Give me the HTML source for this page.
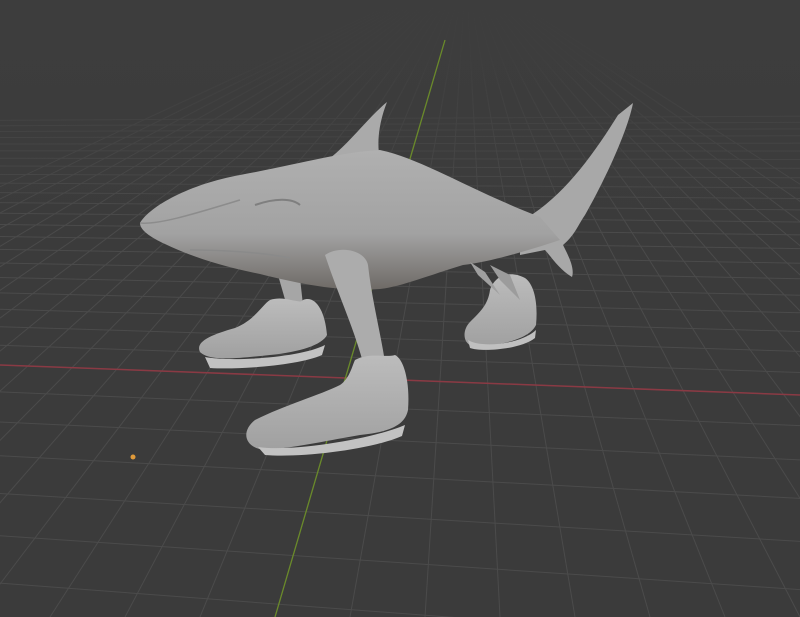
<!DOCTYPE html>
<html><head><style>
html,body{margin:0;padding:0;width:800px;height:617px;overflow:hidden;background:#3b3b3b}
svg{display:block;position:absolute;left:0;top:0}
</style></head><body>
<svg id="s" width="800" height="617" viewBox="0 0 800 617" xmlns="http://www.w3.org/2000/svg">
<defs>
<linearGradient id="body" x1="0" y1="0" x2="0" y2="1">
<stop offset="0" stop-color="#b0b0b0"/><stop offset="0.6" stop-color="#a2a2a2"/><stop offset="1" stop-color="#6e6a66"/>
</linearGradient>
<linearGradient id="shoe" x1="0" y1="0" x2="0" y2="1">
<stop offset="0" stop-color="#bcbcbc"/><stop offset="1" stop-color="#a0a0a0"/>
</linearGradient>
<linearGradient id="fade" x1="0" y1="0" x2="0" y2="1">
<stop offset="0" stop-color="#3d3d3d" stop-opacity="1"/><stop offset="0.3" stop-color="#3d3d3d" stop-opacity="0.85"/><stop offset="1" stop-color="#3d3d3d" stop-opacity="0"/>
</linearGradient>
<clipPath id="c"><rect width="800" height="617"/></clipPath>
</defs>
<rect width="800" height="617" fill="#3b3b3b"/>
<g id="grid" stroke="#4b4b4b" stroke-width="1" fill="none" clip-path="url(#c)"></g>
<line x1="0" y1="365" x2="800" y2="395" stroke="#8a3a44" stroke-width="1.5"/>
<rect x="0" y="0" width="800" height="230" fill="url(#fade)"/>
<line x1="445" y1="40" x2="275" y2="617" stroke="#6a8a2a" stroke-width="1.3"/>
<circle cx="133" cy="457" r="2.5" fill="#e09a3a"/>

<path d="M490 290 C495 275 510 270 525 278 C535 285 538 305 536 325 C530 338 505 345 475 347 C462 345 462 330 470 322 C480 312 488 305 490 290Z" fill="url(#shoe)"/>
<path d="M468 340 C480 348 520 345 536 330 L535 338 C520 350 480 352 470 348Z" fill="#c0c0c0"/>
<path d="M278 275 L300 278 L303 305 L288 310Z" fill="#a6a6a6"/>
<path d="M270 300 C285 295 300 305 303 300 C315 295 325 310 327 335 C322 345 300 352 270 355 C240 358 210 362 200 352 C195 342 210 335 235 328 C255 320 262 305 270 300Z" fill="url(#shoe)"/>
<path d="M205 357 C230 362 300 358 325 345 L322 355 C300 365 240 370 210 368Z" fill="#c2c2c2"/>
<path d="M520 222 C560 200 590 160 618 115 L633 103 C628 130 605 180 585 215 C578 225 575 235 563 245 C568 255 575 268 572 277 C560 270 552 258 545 250 L520 255Z" fill="#a8a8a8"/>
<path d="M505 220 L520 210 L515 225Z" fill="#a0a0a0"/>
<path d="M320 165 C345 150 365 120 387 102 C380 120 376 140 380 160 Z" fill="#aaaaaa"/>
<path d="M140 223 C150 206 190 184 240 175 C300 164 340 152 380 150 C420 158 470 190 540 217 L560 240 C530 250 490 262 463 265 C430 275 400 287 380 289 C340 292 300 284 260 274 C220 266 190 256 165 244 C150 237 140 230 140 223Z" fill="url(#body)"/>
<path d="M140 223 C160 225 200 212 240 200" stroke="#8c8c8c" stroke-width="1.5" fill="none"/>
<path d="M190 250 C220 250 260 252 290 258" stroke="#8a8a8a" stroke-width="1.5" fill="none"/>
<path d="M255 205 C275 198 292 198 300 205" stroke="#7f7f7f" stroke-width="2" fill="none"/>
<path d="M470 262 L485 272 L500 295 L478 275Z" fill="#a0a0a0"/>
<path d="M490 265 L510 275 L520 300 L500 280Z" fill="#9c9c9c"/>
<path d="M325 255 C340 245 365 250 368 265 C372 300 380 330 385 362 L365 370 C355 330 340 300 325 255Z" fill="#acacac"/>
<path d="M355 360 C370 352 385 358 395 355 C405 360 410 385 408 410 C405 425 390 432 360 435 C330 440 300 447 265 450 C245 448 240 432 255 420 C285 405 320 395 340 385 C350 378 352 366 355 360Z" fill="url(#shoe)"/>
<path d="M258 447 C290 452 370 440 405 425 L402 436 C370 450 300 458 265 455Z" fill="#c2c2c2"/>
</svg>
<script>
var g=document.getElementById('grid');var ns='http://www.w3.org/2000/svg';
function L(a,b,c,d){var l=document.createElementNS(ns,'line');l.setAttribute('x1',a);l.setAttribute('y1',b);l.setAttribute('x2',c);l.setAttribute('y2',d);g.appendChild(l);}
var V=[466,-30];
for(var i=-16;i<=16;i++){L(V[0],V[1],275+i*75,617);}
var ys=[365],y=365,s=21,k;
for(k=0;k<40;k++){s*=0.94;y-=s;if(y<120)break;ys.push(y);}
y=365;s=24;for(k=0;k<10;k++){s*=1.12;y+=s;if(y>700)break;ys.push(y);}
for(k=0;k<ys.length;k++){var sl=0.0375*(ys[k]-150)/215;L(0,ys[k],800,ys[k]+800*sl);}
</script>
</body></html>
